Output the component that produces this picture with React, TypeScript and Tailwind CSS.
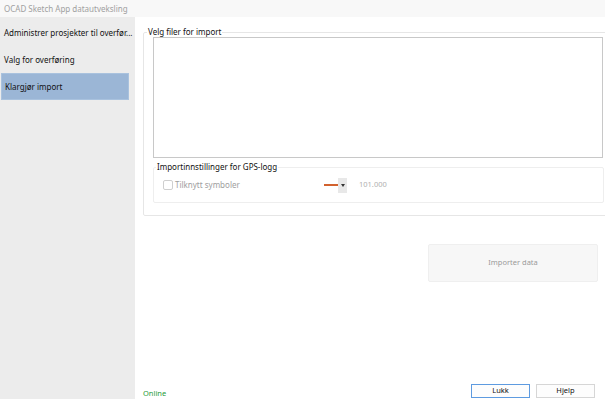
import React from "react";

export default function App() {
  const font = { fontFamily: '"Noto Sans", "Open Sans", sans-serif' };
  return (
    <div className="w-[605px] h-[399px] overflow-hidden bg-white flex flex-col text-[8px] text-[#111]" style={font}>
      <div className="h-[17px] bg-[#f8f8f8] pl-[4px] flex items-center text-[#a0a0a0] text-[8px] leading-none">
        OCAD Sketch App datautveksling
      </div>
      <div className="flex flex-1 min-h-0">
        <div className="w-[135px] bg-[#ececec] flex flex-col pt-[2px]">
          <div className="h-[27px] flex items-center pl-[4px] whitespace-nowrap">Administrer prosjekter til overfør...</div>
          <div className="h-[27px] flex items-center pl-[4px]">Valg for overføring</div>
          <div className="h-[27px] flex items-center pl-[3px] ml-[1px] w-[128px] bg-[#9bb6d6] border border-[#a9c2de]">Klargjør import</div>
        </div>
        <div className="flex-1 flex flex-col min-w-0 relative">
          <fieldset className="ml-[8px] mt-[10px] w-[480px] border border-[#e6e6e6] rounded-[2px] pl-[9px] pb-[12px]">
            <legend className="ml-[-6px] px-[1px] leading-[10px] text-[8px]">Velg filer for import</legend>
            <div className="w-[450px] h-[121px] border border-[#c8c8c8] bg-white" />
            <fieldset className="mt-[4px] w-[451px] h-[41px] border border-[#eeeeee] rounded-[2px] pl-[9px]">
              <legend className="ml-[-7px] px-[1px] leading-[10px] text-[8px]">Importinnstillinger for GPS-logg</legend>
              <div className="flex items-center h-[24px] mt-[1px]">
                <div className="w-[10px] h-[10px] border border-[#cfcfcf] rounded-[2px] bg-white" />
                <span className="ml-[2px] w-[149px] text-[#9e9e9e]">Tilknytt symboler</span>
                <div className="w-[14px] h-[2px] bg-[#d2622e]" />
                <div className="w-[9px] h-[15px] bg-[#e8e8e8] flex items-center justify-center">
                  <div className="w-0 h-0 border-l-[2px] border-r-[2px] border-t-[3px] border-l-transparent border-r-transparent border-t-[#333]" />
                </div>
                <span className="ml-[12px] text-[#b0b0b0] text-[7.5px]">101.000</span>
              </div>
            </fieldset>
          </fieldset>
          <div className="flex justify-end pr-[7px] mt-[28px]">
            <div className="w-[170px] h-[38px] bg-[#f7f7f7] border border-[#efefef] rounded-[2px] flex items-center justify-center text-[#9a9a9a] text-[7.5px]">
              Importer data
            </div>
          </div>
          <div className="mt-auto flex items-end pb-[1px]">
            <span className="ml-[8px] mb-[-1px] text-[#1f9b3a] text-[7.5px]">Online</span>
            <div className="ml-auto flex gap-[6px] mr-[10px]">
              <div className="w-[59px] h-[14px] border border-[#5e9be0] bg-[#fdfdfd] flex items-center justify-center text-[7.5px] leading-none">Lukk</div>
              <div className="w-[59px] h-[14px] border border-[#d6d6d6] bg-[#fdfdfd] flex items-center justify-center text-[7.5px] leading-none">Hjelp</div>
            </div>
          </div>
        </div>
      </div>
    </div>
  );
}
